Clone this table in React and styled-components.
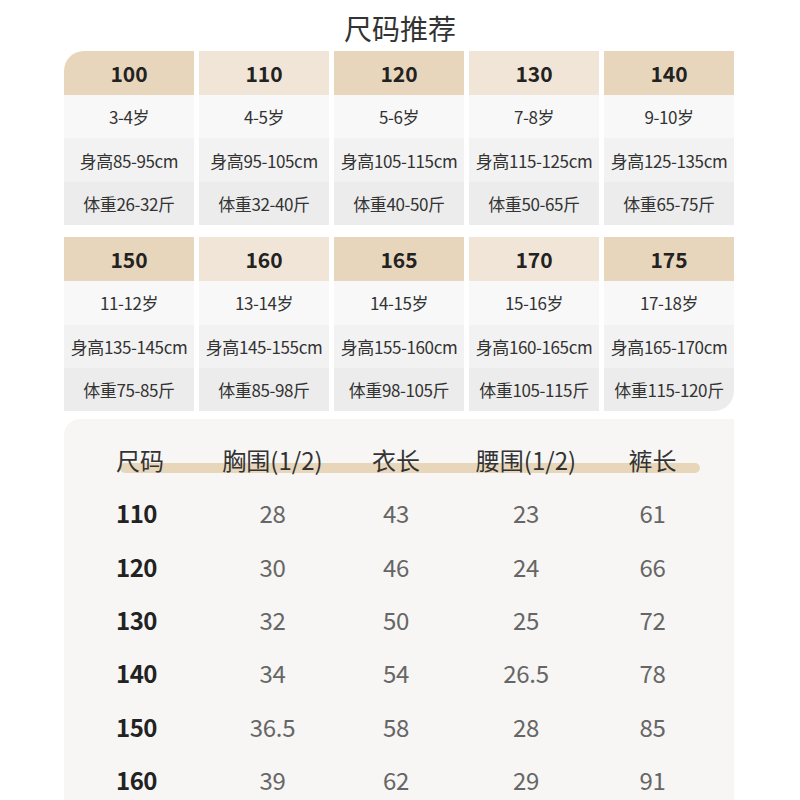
import React from "react";
import styled, { createGlobalStyle } from "styled-components";

const sizesTop = [
  { size: "100", age: "3-4岁", height: "身高85-95cm", weight: "体重26-32斤" },
  { size: "110", age: "4-5岁", height: "身高95-105cm", weight: "体重32-40斤" },
  { size: "120", age: "5-6岁", height: "身高105-115cm", weight: "体重40-50斤" },
  { size: "130", age: "7-8岁", height: "身高115-125cm", weight: "体重50-65斤" },
  { size: "140", age: "9-10岁", height: "身高125-135cm", weight: "体重65-75斤" },
];

const sizesBottom = [
  { size: "150", age: "11-12岁", height: "身高135-145cm", weight: "体重75-85斤" },
  { size: "160", age: "13-14岁", height: "身高145-155cm", weight: "体重85-98斤" },
  { size: "165", age: "14-15岁", height: "身高155-160cm", weight: "体重98-105斤" },
  { size: "170", age: "15-16岁", height: "身高160-165cm", weight: "体重105-115斤" },
  { size: "175", age: "17-18岁", height: "身高165-170cm", weight: "体重115-120斤" },
];

const headers = ["尺码", "胸围(1/2)", "衣长", "腰围(1/2)", "裤长"];

const measures = [
  ["110", "28", "43", "23", "61"],
  ["120", "30", "46", "24", "66"],
  ["130", "32", "50", "25", "72"],
  ["140", "34", "54", "26.5", "78"],
  ["150", "36.5", "58", "28", "85"],
  ["160", "39", "62", "29", "91"],
];

const GlobalStyle = createGlobalStyle`
  html, body {
    margin: 0;
    padding: 0;
    background: #ffffff;
    overflow: hidden;
  }
  body {
    font-family: "Noto Sans CJK SC", "Noto Sans", sans-serif;
    color: #333;
  }
`;

const Page = styled.div`
  width: 800px;
  height: 800px;
  overflow: hidden;
`;

const Title = styled.h1`
  height: 51px;
  margin: 0;
  font-size: 28px;
  font-weight: 400;
  color: #333;
  text-align: center;
  line-height: 56px;
`;

const SizeGrid = styled.div`
  width: 670px;
  margin-left: 64px;
  margin-bottom: ${(p) => p.$gapBelow}px;
  display: grid;
  grid-template-columns: repeat(5, 130px);
  column-gap: 5px;
  border-top-left-radius: ${(p) => (p.$round === "tl" ? 20 : 0)}px;
  border-bottom-right-radius: ${(p) => (p.$round === "br" ? 20 : 0)}px;
  overflow: hidden;
`;

const Column = styled.div`
  display: flex;
  flex-direction: column;
`;

const SizeHead = styled.div`
  height: 44px;
  display: flex;
  align-items: center;
  justify-content: center;
  background: ${(p) => (p.$light ? "#f0e5d6" : "#e7d6bc")};
  font-size: 21px;
  font-weight: 700;
  color: #222;
`;

const rowColors = ["#f8f8f8", "#f2f2f2", "#ececec"];

const Cell = styled.div`
  height: 43.4px;
  display: flex;
  align-items: center;
  justify-content: center;
  background: ${(p) => rowColors[p.$row]};
  font-size: 17px;
  color: #333;
  white-space: nowrap;
  letter-spacing: -0.4px;
`;

const Panel = styled.div`
  margin-left: 64px;
  width: 670px;
  height: 420px;
  background: #f7f6f4;
  border-top-left-radius: 16px;
  padding: 13px 0 0 52px;
  box-sizing: border-box;
`;

const TableRow = styled.div`
  position: relative;
  display: grid;
  grid-template-columns: 94px 125px 122px 138px 115px;
  align-items: center;
  height: ${(p) => (p.$head ? 54 : 53.3)}px;

  ${(p) =>
    p.$head &&
    `
    &::before {
      content: "";
      position: absolute;
      left: 4px;
      top: 31px;
      width: 580px;
      height: 10px;
      border-radius: 5px;
      background: #e8d6ba;
    }
  `}
`;

const HeadText = styled.div`
  position: relative;
  z-index: 1;
  font-size: 24px;
  color: #333;
  text-align: ${(p) => (p.$left ? "left" : "center")};
  white-space: nowrap;
`;

const SizeText = styled.div`
  font-size: 24px;
  font-weight: 700;
  color: #222;
  letter-spacing: -0.5px;
`;

const ValueText = styled.div`
  font-size: 24px;
  color: #666;
  text-align: center;
  letter-spacing: -0.3px;
`;

const SizeBlock = ({ items, round, gapBelow }) => (
  <SizeGrid $round={round} $gapBelow={gapBelow}>
    {items.map((it, i) => (
      <Column key={it.size}>
        <SizeHead $light={i % 2 === 1}>{it.size}</SizeHead>
        <Cell $row={0}>{it.age}</Cell>
        <Cell $row={1}>{it.height}</Cell>
        <Cell $row={2}>{it.weight}</Cell>
      </Column>
    ))}
  </SizeGrid>
);

export default function App() {
  return (
    <>
      <GlobalStyle />
      <Page>
        <Title>尺码推荐</Title>
        <SizeBlock items={sizesTop} round="tl" gapBelow={12} />
        <SizeBlock items={sizesBottom} round="br" gapBelow={8} />
        <Panel>
          <TableRow $head>
            {headers.map((h, i) => (
              <HeadText key={h} $left={i === 0}>
                {h}
              </HeadText>
            ))}
          </TableRow>
          {measures.map((row) => (
            <TableRow key={row[0]}>
              <SizeText>{row[0]}</SizeText>
              {row.slice(1).map((v, i) => (
                <ValueText key={i}>{v}</ValueText>
              ))}
            </TableRow>
          ))}
        </Panel>
      </Page>
    </>
  );
}
